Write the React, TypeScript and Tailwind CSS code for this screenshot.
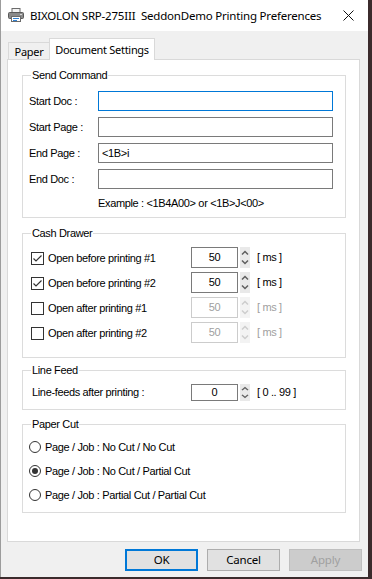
import React from "react";

function PrinterIcon() {
  return (
    <svg width="16" height="16" viewBox="0 0 16 16">
      <rect x="4" y="1.5" width="8" height="4" fill="#f4f4f4" stroke="#6b6b6b" />
      <rect x="0.5" y="5.5" width="15" height="6" rx="1" fill="#8a8a8a" stroke="#5a5a5a" />
      <rect x="3.5" y="9.5" width="9" height="5" fill="#ffffff" stroke="#6b6b6b" />
      <rect x="5" y="11" width="6" height="1" fill="#2f7fd0" />
      <rect x="5" y="13" width="4" height="1" fill="#2f7fd0" />
      <rect x="12" y="7" width="2" height="1" fill="#d8d8d8" />
    </svg>
  );
}

function CloseIcon() {
  return (
    <svg width="11" height="11" viewBox="0 0 11 11">
      <path d="M0.5 0.5 L10.5 10.5 M10.5 0.5 L0.5 10.5" stroke="#111" strokeWidth="1" />
    </svg>
  );
}

function Arrows({ disabled }: { disabled?: boolean }) {
  const c = disabled ? "#cdcdcd" : "#5f5f5f";
  return (
    <div className={disabled ? "w-[10px] h-full bg-[#f3f3f3] flex" : "w-[10px] h-full bg-[#e9e9e9] flex"}>
      <svg width="10" height="100%" viewBox="0 0 10 21" preserveAspectRatio="none">
        <polyline points="2,7.5 5,4.5 8,7.5" fill="none" stroke={c} strokeWidth="1.5" />
        <polyline points="2,13.5 5,16.5 8,13.5" fill="none" stroke={c} strokeWidth="1.5" />
      </svg>
    </div>
  );
}

function CheckBox({ checked }: { checked?: boolean }) {
  return (
    <div className="w-[13px] h-[13px] border border-[#333333] bg-white flex items-center justify-center shrink-0">
      {checked && (
        <svg width="11" height="11" viewBox="0 0 11 11">
          <polyline points="1.5,5.5 4,8 9.5,2.5" fill="none" stroke="#333" strokeWidth="1.2" />
        </svg>
      )}
    </div>
  );
}

function Radio({ checked }: { checked?: boolean }) {
  return (
    <div className="w-[12px] h-[12px] rounded-full border border-[#333333] bg-white flex items-center justify-center shrink-0">
      {checked && <div className="w-[6px] h-[6px] rounded-full bg-[#333333]" />}
    </div>
  );
}

function DrawerRow({ label, checked, disabled }: { label: string; checked?: boolean; disabled?: boolean }) {
  return (
    <div className="flex items-center h-[21px]">
      <div className="w-[160px] flex items-center gap-[4px] pt-[2px]">
        <CheckBox checked={checked} />
        <span>{label}</span>
      </div>
      <div
        className={
          disabled
            ? "w-[47px] h-[21px] border border-[#cccccc] bg-white flex items-center justify-center text-[#a0a0a0]"
            : "w-[47px] h-[21px] border border-[#7a7a7a] bg-white flex items-center justify-center"
        }
      >
        50
      </div>
      <div className="ml-[2px] h-[21px]">
        <Arrows disabled={disabled} />
      </div>
      <span className={disabled ? "ml-[7px] text-[#a0a0a0]" : "ml-[7px]"}>[ ms ]</span>
    </div>
  );
}

function Group({ title, className, children }: { title: string; className: string; children: React.ReactNode }) {
  return (
    <div className={"relative border border-[#dcdcdc] " + className}>
      <div className="absolute left-[8px] -top-[7px] bg-white px-[1px] leading-[13px]">{title}</div>
      {children}
    </div>
  );
}

export default function App() {
  const ui = "font-['Liberation_Sans',Arial,sans-serif] text-[11px] tracking-[-0.35px] text-black";
  return (
    <div className="w-[372px] h-[579px] bg-[#3b2b2c] overflow-hidden">
      <div className="w-[368px] h-[577px] bg-[#f0f0f0] border-l border-[#9c9c9c] flex flex-col font-['Noto_Sans','Open_Sans',sans-serif]">
        {/* Title bar */}
        <div className="h-[31px] bg-white flex items-center shrink-0">
          <div className="ml-[7px] mt-[-1px]">
            <PrinterIcon />
          </div>
          <span className="ml-[6px] text-[11.5px] whitespace-pre text-black tracking-[-0.2px]">
            BIXOLON SRP-275III  SeddonDemo Printing Preferences
          </span>
          <div className="ml-auto mr-[14px] flex">
            <CloseIcon />
          </div>
        </div>

        {/* Tabs */}
        <div className="h-[21px] mt-[7px] pl-[7px] flex items-start text-[11px] text-black tracking-[-0.3px] whitespace-nowrap">
          <div className="mt-[4px] h-[17px] w-[41px] border-t border-l border-[#d9d9d9] bg-[#f0f0f0] flex items-center justify-center leading-none pt-[1px]">
            Paper
          </div>
          <div className="relative z-10 h-[22px] w-[106px] border-t border-l border-r border-[#d9d9d9] bg-white flex items-center justify-center leading-none pb-[1px]">
            Document Settings
          </div>
        </div>

        {/* Panel */}
        <div className={"ml-[6px] w-[353px] h-[483px] bg-white border border-[#d9d9d9] pt-[15px] pl-[14px] " + ui}>
          <Group title="Send Command" className="w-[324px] h-[143px] pt-[15px] pl-[6px]">
            <div className="flex flex-col gap-[6px]">
              {[
                ["Start Doc :", "", true],
                ["Start Page :", "", false],
                ["End Page :", "<1B>i", false],
                ["End Doc :", "", false],
              ].map(([l, v, f]) => (
                <div key={l as string} className="flex items-center h-[20px]">
                  <span className="w-[69px]">{l as string}</span>
                  <div
                    className={
                      f
                        ? "w-[235px] h-[20px] border border-[#0078d7] bg-white flex items-center pl-[3px]"
                        : "w-[235px] h-[20px] border border-[#7a7a7a] bg-white flex items-center pl-[3px]"
                    }
                  >
                    {v as string}
                  </div>
                </div>
              ))}
            </div>
            <div className="mt-[8px] ml-[69px] leading-[13px]">Example : &lt;1B4A00&gt; or &lt;1B&gt;J&lt;00&gt;</div>
          </Group>

          <Group title="Cash Drawer" className="mt-[15px] w-[324px] h-[125px] pt-[13px] pl-[8px]">
            <div className="flex flex-col gap-[4px]">
              <DrawerRow label="Open before printing #1" checked />
              <DrawerRow label="Open before printing #2" checked />
              <DrawerRow label="Open after printing #1" disabled />
              <DrawerRow label="Open after printing #2" disabled />
            </div>
          </Group>

          <Group title="Line Feed" className="mt-[12px] w-[324px] h-[40px] pt-[13px] pl-[9px]">
            <div className="flex items-center h-[17px]">
              <span className="w-[159px]">Line-feeds after printing :</span>
              <div className="w-[47px] h-[17px] border border-[#7a7a7a] bg-white flex items-center justify-center">0</div>
              <div className="ml-[2px] h-[17px]">
                <Arrows />
              </div>
              <span className="ml-[7px]">[ 0 .. 99 ]</span>
            </div>
          </Group>

          <Group title="Paper Cut" className="mt-[14px] w-[324px] h-[89px] pt-[14px] pl-[6px]">
            <div className="flex flex-col gap-[8px]">
              {[
                ["Page / Job : No Cut / No Cut", false],
                ["Page / Job : No Cut / Partial Cut", true],
                ["Page / Job : Partial Cut / Partial Cut", false],
              ].map(([l, c]) => (
                <div key={l as string} className="flex items-center h-[16px] gap-[4px]">
                  <Radio checked={c as boolean} />
                  <span>{l as string}</span>
                </div>
              ))}
            </div>
          </Group>
        </div>

        {/* Buttons */}
        <div className="mt-[7px] flex justify-end gap-[9px] pr-[6px] text-[11.5px] tracking-[-0.2px]">
          <div className="w-[73px] h-[22px] border-2 border-[#0078d7] bg-[#e1e1e1] flex items-center justify-center text-black">
            OK
          </div>
          <div className="w-[73px] h-[22px] border border-[#adadad] bg-[#e1e1e1] flex items-center justify-center text-black">
            Cancel
          </div>
          <div className="w-[73px] h-[22px] border border-[#bfbfbf] bg-[#cccccc] flex items-center justify-center text-[#a0a0a0]">
            Apply
          </div>
        </div>
      </div>
    </div>
  );
}
